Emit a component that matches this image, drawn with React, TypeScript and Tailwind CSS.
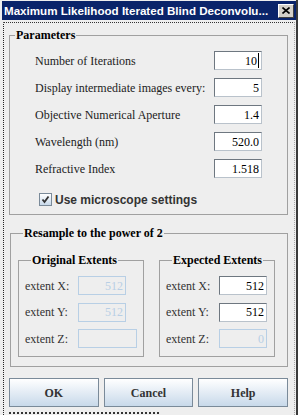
import React from "react"

const serif = "font-['Liberation_Serif',serif]"

type FieldProps = {
  value?: string
  disabled?: boolean
  wide?: boolean
  caret?: boolean
}

const Field = ({ value, disabled, wide, caret }: FieldProps) => {
  return (
    <div
      className={`h-[19px] ${wide ? "w-[59px]" : "w-[48px]"} flex items-center justify-end pr-[2px] text-[12px] ${serif} ${
        disabled
          ? "border border-[#b8cfe5] text-[#b8cfe5]"
          : "border border-[#6e7780] border-r-[#b9c2cb] border-b-[#b9c2cb] bg-white text-black"
      }`}
    >
      <span className="leading-none">{value}</span>
      {caret && <span className="ml-[1px] w-[1px] h-[15px] bg-black" />}
    </div>
  )
}

const Row = ({ label, value, caret }: { label: string; value: string; caret?: boolean }) => {
  return (
    <div className="flex items-center justify-between h-[19px]">
      <span className={`${serif} text-[12px] text-[#222]`}>{label}</span>
      <Field value={value} caret={caret} />
    </div>
  )
}

const ExtentRow = ({ axis, value, disabled, wide }: { axis: string; value?: string; disabled?: boolean; wide?: boolean }) => {
  return (
    <div className="flex items-center h-[19px]">
      <span className={`${serif} text-[12px] text-[#333] w-[53px]`}>extent {axis}:</span>
      <Field value={value} disabled={disabled} wide={wide} />
    </div>
  )
}

const Button = ({ children }: { children: React.ReactNode }) => {
  return (
    <button
      className={`w-[90px] h-[29px] border border-[#7a8a99] bg-gradient-to-b from-white to-[#c8d9ea] ${serif} font-bold text-[12px] text-[#333]`}
    >
      {children}
    </button>
  )
}

export default function App() {
  return (
    <div className="w-[298px] h-[415px] bg-[#eeeeee] overflow-hidden flex flex-col border-r-2 border-[#3a3a3a]">
      <div className="mt-[1px] ml-[2px] h-[19px] bg-[#0a246a] flex items-center justify-between pl-[2px] pr-[2px]">
        <span className="font-['Liberation_Sans',sans-serif] font-bold text-[11.6px] text-white whitespace-nowrap">
          Maximum Likelihood Iterated Blind Deconvolu...
        </span>
        <div className="w-[16px] h-[14px] bg-[#d4d0c8] border border-t-white border-l-white border-r-[#404040] border-b-[#404040] flex items-center justify-center">
          <svg width="8" height="7" viewBox="0 0 8 7">
            <path d="M0.5 0.5 L7.5 6.5 M7.5 0.5 L0.5 6.5" stroke="black" strokeWidth="1.6" />
          </svg>
        </div>
      </div>

      <div className="mt-[2px] ml-[3px] mr-[1px] flex-1 flex flex-col border-t border-l border-dotted border-t-[#333] border-l-[#222] border-r border-r-[#a8a8a8] pl-[5px] pr-[6px] pt-[4px]">
        <fieldset className="border border-[#a0a0a0] pb-[8px]">
          <legend className={`ml-[5px] px-[1px] ${serif} font-bold text-[12px] leading-[16px] text-black`}>Parameters</legend>
          <div className="mt-[8px] pl-[25px] pr-[25px] flex flex-col gap-[8px]">
            <Row label="Number of Iterations" value="10" caret />
            <Row label="Display intermediate images every:" value="5" />
            <Row label="Objective Numerical Aperture" value="1.4" />
            <Row label="Wavelength (nm)" value="520.0" />
            <Row label="Refractive Index" value="1.518" />
          </div>
          <label className="mt-[15px] ml-[29px] flex items-center gap-[3px] h-[13px]">
            <span className="w-[13px] h-[13px] border border-[#7a8a99] bg-gradient-to-b from-white to-[#c8d9ea] flex items-center justify-center">
              <svg width="9" height="9" viewBox="0 0 9 9">
                <path d="M1.5 4.5 L3.5 7 L7.5 1.5" stroke="#333" strokeWidth="1.8" fill="none" />
              </svg>
            </span>
            <span className="font-['Liberation_Sans',sans-serif] font-bold text-[12px] text-[#333]">Use microscope settings</span>
          </label>
        </fieldset>

        <fieldset className="mt-[10px] ml-[1px] border border-[#a0a0a0] pb-[9px] pl-[7px] pr-[12px]">
          <legend className={`ml-[5px] px-[1px] ${serif} font-bold text-[12px] leading-[16px] text-black`}>
            Resample to the power of 2
          </legend>
          <div className="mt-[11px] flex gap-[15px]">
            <fieldset className="w-[126px] border border-[#a0a0a0] pb-[8px] pl-[6px]">
              <legend className={`ml-[6px] px-[1px] ${serif} font-bold text-[12px] leading-[16px] text-black`}>
                Original Extents
              </legend>
              <div className="mt-[8px] flex flex-col gap-[7.5px]">
                <ExtentRow axis="X" value="512" disabled />
                <ExtentRow axis="Y" value="512" disabled />
                <ExtentRow axis="Z" disabled wide />
              </div>
            </fieldset>
            <fieldset className="w-[116px] border border-[#a0a0a0] pb-[8px] pl-[6px]">
              <legend className={`ml-[6px] px-[1px] ${serif} font-bold text-[12px] leading-[16px] text-black`}>
                Expected Extents
              </legend>
              <div className="mt-[8px] flex flex-col gap-[7.5px]">
                <ExtentRow axis="X" value="512" />
                <ExtentRow axis="Y" value="512" />
                <ExtentRow axis="Z" value="0" disabled />
              </div>
            </fieldset>
          </div>
        </fieldset>

        <div className="mt-[11px] flex gap-[5px]">
          <Button>OK</Button>
          <Button>Cancel</Button>
          <Button>Help</Button>
        </div>
        <div className="mt-[4px] h-[3px] border-b-2 border-dotted border-[#333] w-[150px]" />
      </div>
    </div>
  )
}
